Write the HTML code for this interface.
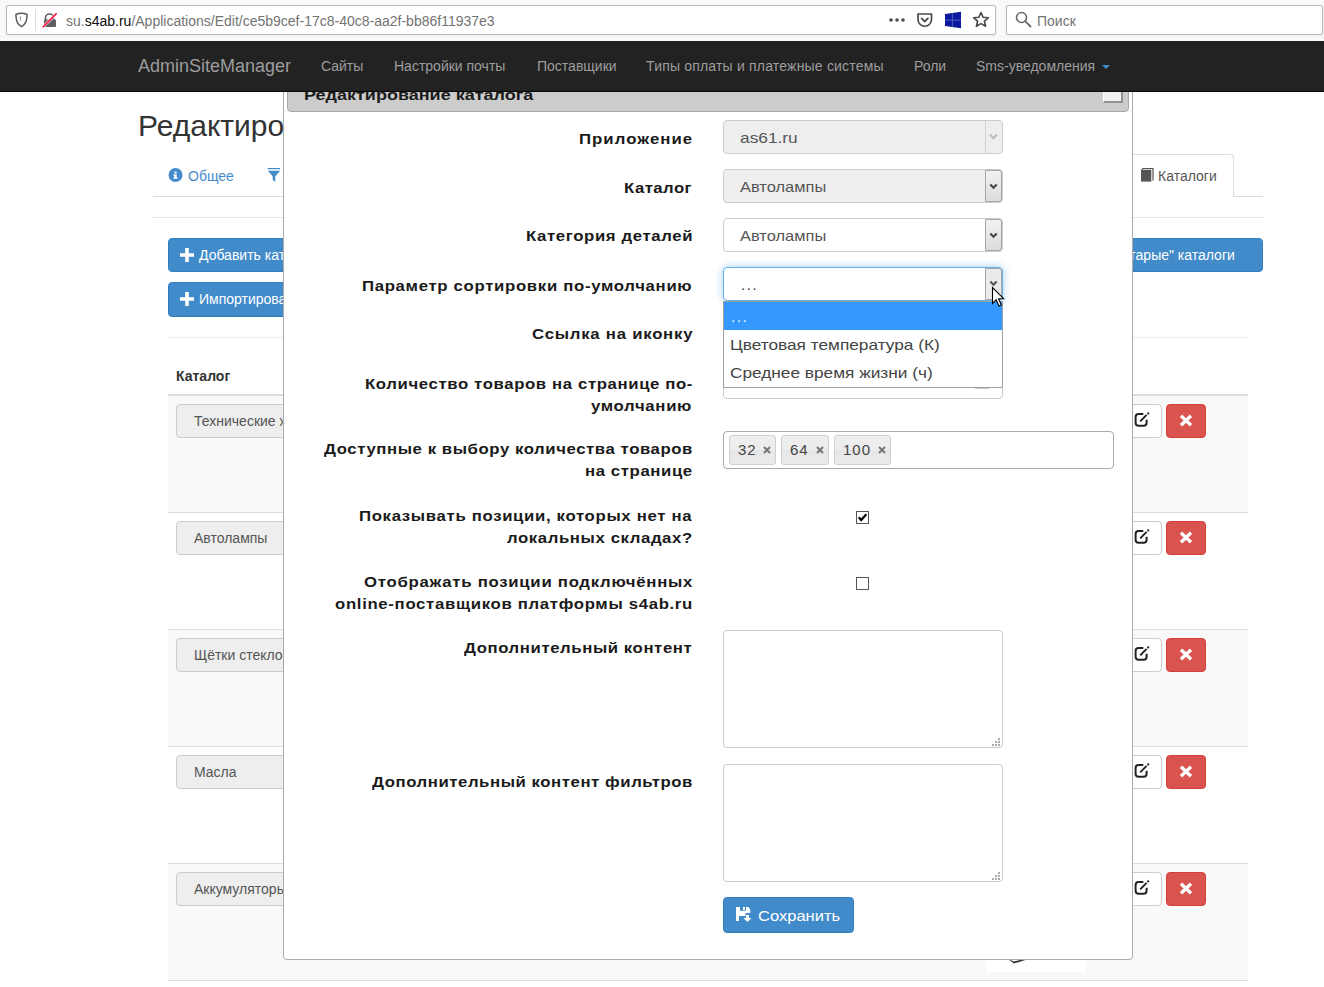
<!DOCTYPE html>
<html><head><meta charset="utf-8">
<style>
*{box-sizing:border-box}
html,body{margin:0;padding:0}
body{width:1324px;height:987px;overflow:hidden;position:relative;background:#fff;font-family:"Liberation Sans",sans-serif;color:#333}
.a{position:absolute}
.t{position:absolute;white-space:nowrap;line-height:1}
/* browser chrome */
#chrome{z-index:11;left:0;top:0;width:1324px;height:41px;background:#f9f9fa}
.ubox{background:#fff;border:1px solid #b9b9bb;border-radius:2px;box-shadow:0 1px 3px rgba(0,0,0,.06)}
/* navbar */
#nav{z-index:10;left:0;top:41px;width:1324px;height:51px;background:#222;border-bottom:1px solid #080808}
.nl{color:#9d9d9d;font-size:14px}
/* page */
.btnp{background:#428bca;border:1px solid #357ebd;border-radius:4px;color:#fff;font-size:14px}
.dis{background:#eee;border:1px solid #ccc;border-radius:4px}
.row{left:168px;width:1080px;height:117px;border-top:1px solid #ddd}
.odd{background:#f9f9f9}
.ebtn{background:#fff;border:1px solid #ccc;border-radius:4px}
.dbtn{background:#d9534f;border:1px solid #d43f3a;border-radius:4px}
/* modal */
#modal{left:283px;top:70px;width:850px;height:890px;background:#fff;border:1px solid #aaa;border-radius:4px}
.lbl{position:absolute;white-space:nowrap;line-height:1;font-weight:bold;font-size:15px;color:#1a1a1a;transform-origin:0 0}
.sel{position:absolute;left:723px;width:280px;height:34px;border:1px solid #ccc;border-radius:4px;background:#fff}
.vt{font-size:15px;color:#555;transform-origin:0 0}
.sx{transform-origin:0 0}
</style></head><body>

<!-- ============ BROWSER CHROME ============ -->
<div id="chrome" class="a">
  <div class="a ubox" style="left:6px;top:5px;width:990px;height:30px"></div>
  <!-- shield -->
  <svg class="a" style="left:14px;top:12px" width="15" height="16" viewBox="0 0 15 16"><path d="M7.5 1.3 C5.5 1.3 3.5 1.8 1.9 2.5 C1.9 8 3 12.5 7.5 14.6 C12 12.5 13.1 8 13.1 2.5 C11.5 1.8 9.5 1.3 7.5 1.3 Z" fill="none" stroke="#5a5a5a" stroke-width="1.5"/><path d="M5.6 5 L6.7 4.6 L6.7 10.2 Z" fill="#5a5a5a"/></svg>
  <div class="a" style="left:35px;top:9px;width:1px;height:22px;background:#ddd"></div>
  <!-- insecure lock -->
  <svg class="a" style="left:42px;top:12px" width="16" height="16" viewBox="0 0 16 16"><path d="M3.5 8 V6 A4 4 0 0 1 11.5 6 V8" fill="none" stroke="#5f5f5f" stroke-width="1.6"/><rect x="2" y="7.5" width="12" height="7.5" rx="1" fill="#5f5f5f"/><path d="M1 15 L14.5 1.5" stroke="#f9f9fa" stroke-width="2.6"/><path d="M1.3 14.7 L14.2 1.8" stroke="#ff0039" stroke-width="1.6" stroke-linecap="round"/></svg>
  <div class="t" style="left:66px;top:14px;font-size:14px;color:#737373">su.<span style="color:#0c0c0d">s4ab.ru</span>/Applications/Edit/ce5b9cef-17c8-40c8-aa2f-bb86f11937e3</div>
  <!-- dots -->
  <svg class="a" style="left:888px;top:17px" width="18" height="6" viewBox="0 0 18 6"><circle cx="3" cy="3" r="1.8" fill="#4a4a4f"/><circle cx="9" cy="3" r="1.8" fill="#4a4a4f"/><circle cx="15" cy="3" r="1.8" fill="#4a4a4f"/></svg>
  <!-- pocket -->
  <svg class="a" style="left:916px;top:12px" width="18" height="16" viewBox="0 0 18 16"><path d="M2 2 H15.5 V7.5 A6.75 6.75 0 0 1 2 7.5 Z" fill="none" stroke="#4a4a4f" stroke-width="1.7" stroke-linejoin="round"/><path d="M5.6 6.4 L8.75 9.4 L11.9 6.4" fill="none" stroke="#4a4a4f" stroke-width="1.8" stroke-linecap="round"/></svg>
  <!-- windows -->
  <svg class="a" style="left:945px;top:11px" width="17" height="18" viewBox="0 0 17 18"><path d="M0 3 L16 0.8 V17.2 L0 15 Z" fill="#0b1a9e"/><path d="M7.4 2 V16.2" stroke="#5563c0" stroke-width="0.9"/><path d="M0 9.1 H16" stroke="#5563c0" stroke-width="0.9"/></svg>
  <!-- star -->
  <svg class="a" style="left:972px;top:11px" width="18" height="18" viewBox="0 0 18 18"><path d="M9 1.5 L11.2 6.3 L16.3 6.8 L12.4 10.2 L13.6 15.3 L9 12.6 L4.4 15.3 L5.6 10.2 L1.7 6.8 L6.8 6.3 Z" fill="none" stroke="#4a4a4f" stroke-width="1.6" stroke-linejoin="round"/></svg>
  <div class="a ubox" style="left:1006px;top:5px;width:317px;height:30px"></div>
  <svg class="a" style="left:1015px;top:11px" width="17" height="17" viewBox="0 0 17 17"><circle cx="6.5" cy="6.5" r="5" fill="none" stroke="#6a6a6a" stroke-width="1.6"/><path d="M10.2 10.2 L15.5 15.5" stroke="#6a6a6a" stroke-width="1.8" stroke-linecap="round"/></svg>
  <div class="t" style="left:1037px;top:14px;font-size:14px;color:#737373">Поиск</div>
</div>

<!-- ============ NAVBAR ============ -->
<div id="nav" class="a">
  <div class="t" style="left:138px;top:16px;font-size:18px;color:#9d9d9d">AdminSiteManager</div>
  <div class="t nl" style="left:321px;top:18px">Сайты</div>
  <div class="t nl" style="left:394px;top:18px">Настройки почты</div>
  <div class="t nl" style="left:537px;top:18px">Поставщики</div>
  <div class="t nl" style="left:646px;top:18px;letter-spacing:0.19px">Типы оплаты и платежные системы</div>
  <div class="t nl" style="left:914px;top:18px">Роли</div>
  <div class="t nl" style="left:976px;top:18px">Sms-уведомления</div>
  <div class="a" style="left:1102px;top:24px;width:0;height:0;border-left:4px solid transparent;border-right:4px solid transparent;border-top:4px solid #428bca"></div>
</div>

<!-- ============ PAGE ============ -->
<div class="t" style="left:138px;top:111px;font-size:30px;color:#333">Редактирование приложения</div>


<!-- tabs -->
<div class="a" style="left:153px;top:196px;width:1110px;height:1px;background:#ddd"></div>
<div class="a" style="left:153px;top:217px;width:1110px;height:1px;background:#e5e5e5"></div>
<svg class="a" style="left:168px;top:168px" width="15" height="15" viewBox="0 0 15 15"><circle cx="7.5" cy="7" r="7" fill="#428bca"/><rect x="6.3" y="3.7" width="2.4" height="1.6" fill="#fff"/><path d="M5.3 6.2 H8.7 V9.4 H9.8 V10.7 H5.3 V9.4 H6.3 V7.4 H5.3 Z" fill="#fff"/></svg>
<div class="t" style="left:188px;top:169px;font-size:14px;color:#428bca">Общее</div>
<svg class="a" style="left:267px;top:168px" width="14" height="15" viewBox="0 0 14 15"><rect x="0.8" y="0" width="12.4" height="1.2" fill="#428bca"/><path d="M0.8 2.8 H13.2 L8.3 8.2 V13.8 L5.7 12 V8.2 Z" fill="#428bca"/></svg>
<div class="a" style="left:1120px;top:154px;width:114px;height:43px;background:#fff;border:1px solid #ddd;border-bottom:0;border-radius:4px 4px 0 0"></div>
<svg class="a" style="left:1140px;top:167px" width="15" height="16" viewBox="0 0 15 16"><path d="M1 3 L2.6 1 H13.6 V13.6 H12.4 V2.2 H3.2 L2.2 3 Z" fill="#555"/><rect x="1" y="3" width="10.3" height="11.6" fill="#555"/></svg>
<div class="t" style="left:1158px;top:169px;font-size:14px;color:#555">Каталоги</div>

<!-- buttons -->
<div class="a btnp" style="left:168px;top:238px;width:180px;height:34px"></div>
<svg class="a" style="left:180px;top:248px" width="14" height="14" viewBox="0 0 14 14"><path d="M5.2 0 H8.8 V5.2 H14 V8.8 H8.8 V14 H5.2 V8.8 H0 V5.2 H5.2 Z" fill="#fff"/></svg>
<div class="t" style="left:199px;top:248px;font-size:14px;color:#fff">Добавить каталог</div>
<div class="a btnp" style="left:168px;top:282px;width:200px;height:35px"></div>
<svg class="a" style="left:180px;top:292px" width="14" height="14" viewBox="0 0 14 14"><path d="M5.2 0 H8.8 V5.2 H14 V8.8 H8.8 V14 H5.2 V8.8 H0 V5.2 H5.2 Z" fill="#fff"/></svg>
<div class="t" style="left:199px;top:292px;font-size:14px;color:#fff">Импортировать каталоги</div>
<div class="a btnp" style="left:1040px;top:238px;width:223px;height:34px"></div>
<div class="t" style="left:1060px;top:248px;font-size:14px;color:#fff">Удалить "старые" каталоги</div>

<div class="a" style="left:168px;top:337px;width:1080px;height:1px;background:#eee"></div>

<!-- table -->
<div class="t" style="left:176px;top:369px;font-size:14px;font-weight:bold;color:#333">Каталог</div>
<div class="a" style="left:168px;top:394px;width:1080px;height:2px;background:#ddd"></div>
<div class="a" style="left:168px;top:396px;width:1080px;height:116px;background:#f9f9f9"></div>
<div class="a dis" style="left:176px;top:404px;width:300px;height:34px"></div>
<div class="t" style="left:194px;top:414px;font-size:14px;color:#555">Технические жидкости</div>
<div class="a ebtn" style="left:1122px;top:404px;width:40px;height:34px"></div>
<svg class="a" style="left:1134px;top:412px" width="16" height="15" viewBox="0 0 16 15"><path d="M9.3 1.9 H4.6 Q1.6 1.9 1.6 4.9 V10.7 Q1.6 13.7 4.6 13.7 H9.6 Q12.6 13.7 12.6 10.7 V7.8" fill="none" stroke="#222" stroke-width="2"/><path d="M6.2 9.3 L12.6 2.9" stroke="#222" stroke-width="1.9"/><circle cx="14.2" cy="1.4" r="1.1" fill="#222"/></svg>
<div class="a dbtn" style="left:1166px;top:404px;width:40px;height:34px"></div>
<svg class="a" style="left:1179px;top:414px" width="14" height="13" viewBox="0 0 14 13"><path d="M2 1.8 L12 11.2 M12 1.8 L2 11.2" stroke="#fff" stroke-width="3.3"/></svg>
<div class="a" style="left:168px;top:512px;width:1080px;height:1px;background:#ddd"></div>
<div class="a" style="left:168px;top:513px;width:1080px;height:116px;background:#fff"></div>
<div class="a dis" style="left:176px;top:521px;width:300px;height:34px"></div>
<div class="t" style="left:194px;top:531px;font-size:14px;color:#555">Автолампы</div>
<div class="a ebtn" style="left:1122px;top:521px;width:40px;height:34px"></div>
<svg class="a" style="left:1134px;top:529px" width="16" height="15" viewBox="0 0 16 15"><path d="M9.3 1.9 H4.6 Q1.6 1.9 1.6 4.9 V10.7 Q1.6 13.7 4.6 13.7 H9.6 Q12.6 13.7 12.6 10.7 V7.8" fill="none" stroke="#222" stroke-width="2"/><path d="M6.2 9.3 L12.6 2.9" stroke="#222" stroke-width="1.9"/><circle cx="14.2" cy="1.4" r="1.1" fill="#222"/></svg>
<div class="a dbtn" style="left:1166px;top:521px;width:40px;height:34px"></div>
<svg class="a" style="left:1179px;top:531px" width="14" height="13" viewBox="0 0 14 13"><path d="M2 1.8 L12 11.2 M12 1.8 L2 11.2" stroke="#fff" stroke-width="3.3"/></svg>
<div class="a" style="left:168px;top:629px;width:1080px;height:1px;background:#ddd"></div>
<div class="a" style="left:168px;top:630px;width:1080px;height:116px;background:#f9f9f9"></div>
<div class="a dis" style="left:176px;top:638px;width:300px;height:34px"></div>
<div class="t" style="left:194px;top:648px;font-size:14px;color:#555">Щётки стеклоочистителя</div>
<div class="a ebtn" style="left:1122px;top:638px;width:40px;height:34px"></div>
<svg class="a" style="left:1134px;top:646px" width="16" height="15" viewBox="0 0 16 15"><path d="M9.3 1.9 H4.6 Q1.6 1.9 1.6 4.9 V10.7 Q1.6 13.7 4.6 13.7 H9.6 Q12.6 13.7 12.6 10.7 V7.8" fill="none" stroke="#222" stroke-width="2"/><path d="M6.2 9.3 L12.6 2.9" stroke="#222" stroke-width="1.9"/><circle cx="14.2" cy="1.4" r="1.1" fill="#222"/></svg>
<div class="a dbtn" style="left:1166px;top:638px;width:40px;height:34px"></div>
<svg class="a" style="left:1179px;top:648px" width="14" height="13" viewBox="0 0 14 13"><path d="M2 1.8 L12 11.2 M12 1.8 L2 11.2" stroke="#fff" stroke-width="3.3"/></svg>
<div class="a" style="left:168px;top:746px;width:1080px;height:1px;background:#ddd"></div>
<div class="a" style="left:168px;top:747px;width:1080px;height:116px;background:#fff"></div>
<div class="a dis" style="left:176px;top:755px;width:300px;height:34px"></div>
<div class="t" style="left:194px;top:765px;font-size:14px;color:#555">Масла</div>
<div class="a ebtn" style="left:1122px;top:755px;width:40px;height:34px"></div>
<svg class="a" style="left:1134px;top:763px" width="16" height="15" viewBox="0 0 16 15"><path d="M9.3 1.9 H4.6 Q1.6 1.9 1.6 4.9 V10.7 Q1.6 13.7 4.6 13.7 H9.6 Q12.6 13.7 12.6 10.7 V7.8" fill="none" stroke="#222" stroke-width="2"/><path d="M6.2 9.3 L12.6 2.9" stroke="#222" stroke-width="1.9"/><circle cx="14.2" cy="1.4" r="1.1" fill="#222"/></svg>
<div class="a dbtn" style="left:1166px;top:755px;width:40px;height:34px"></div>
<svg class="a" style="left:1179px;top:765px" width="14" height="13" viewBox="0 0 14 13"><path d="M2 1.8 L12 11.2 M12 1.8 L2 11.2" stroke="#fff" stroke-width="3.3"/></svg>
<div class="a" style="left:168px;top:863px;width:1080px;height:1px;background:#ddd"></div>
<div class="a" style="left:168px;top:864px;width:1080px;height:116px;background:#f9f9f9"></div>
<div class="a dis" style="left:176px;top:872px;width:300px;height:34px"></div>
<div class="t" style="left:194px;top:882px;font-size:14px;color:#555">Аккумуляторы</div>
<div class="a ebtn" style="left:1122px;top:872px;width:40px;height:34px"></div>
<svg class="a" style="left:1134px;top:880px" width="16" height="15" viewBox="0 0 16 15"><path d="M9.3 1.9 H4.6 Q1.6 1.9 1.6 4.9 V10.7 Q1.6 13.7 4.6 13.7 H9.6 Q12.6 13.7 12.6 10.7 V7.8" fill="none" stroke="#222" stroke-width="2"/><path d="M6.2 9.3 L12.6 2.9" stroke="#222" stroke-width="1.9"/><circle cx="14.2" cy="1.4" r="1.1" fill="#222"/></svg>
<div class="a dbtn" style="left:1166px;top:872px;width:40px;height:34px"></div>
<svg class="a" style="left:1179px;top:882px" width="14" height="13" viewBox="0 0 14 13"><path d="M2 1.8 L12 11.2 M12 1.8 L2 11.2" stroke="#fff" stroke-width="3.3"/></svg>


<div class="a" style="left:168px;top:980px;width:1080px;height:1px;background:#ddd"></div>
<div class="a" style="left:986px;top:955px;width:100px;height:17px;background:#fff"></div>
<svg class="a" style="left:1005px;top:958px" width="30" height="8" viewBox="0 0 30 8"><path d="M3 1 L9 5.5 L25 0.5 L17 1.5 L9 3.5 Z" fill="#333"/></svg>

<!-- ============ MODAL ============ -->
<div id="modal" class="a" style="left:283px;top:60px;width:850px;height:900px"></div>
<div class="a" style="left:287px;top:60px;width:842px;height:52px;background:#ccc;border:1px solid #aaa;border-radius:4px"></div>
<div class="lbl" style="left:304px;top:87px;font-size:15px;transform:scaleX(1.2)">Редактирование каталога</div>
<div class="a" style="left:1103px;top:80px;width:20px;height:23px;background:#f0f0f0;border-style:solid;border-width:1px 2px 2px 1px;border-color:#fff #929292 #929292 #fff"></div>
<div class="lbl" style="left:579.3px;top:130.6px;font-size:15.5px;letter-spacing:0.979px;transform:scaleX(1.08)">Приложение</div>
<div class="lbl" style="left:623.9px;top:179.9px;font-size:15.5px;letter-spacing:0.420px;transform:scaleX(1.08)">Каталог</div>
<div class="lbl" style="left:525.7px;top:228.4px;font-size:15.5px;letter-spacing:0.590px;transform:scaleX(1.08)">Категория деталей</div>
<div class="lbl" style="left:362.4px;top:277.9px;font-size:15.5px;letter-spacing:0.634px;transform:scaleX(1.08)">Параметр сортировки по-умолчанию</div>
<div class="lbl" style="left:532.0px;top:326.4px;font-size:15.5px;letter-spacing:0.707px;transform:scaleX(1.08)">Ссылка на иконку</div>
<div class="lbl" style="left:365.2px;top:375.6px;font-size:15.5px;letter-spacing:0.577px;transform:scaleX(1.08)">Количество товаров на странице по-</div>
<div class="lbl" style="left:591.0px;top:397.5px;font-size:15.5px;letter-spacing:0.623px;transform:scaleX(1.08)">умолчанию</div>
<div class="lbl" style="left:323.9px;top:441.3px;font-size:15.5px;letter-spacing:0.536px;transform:scaleX(1.08)">Доступные к выбору количества товаров</div>
<div class="lbl" style="left:585.0px;top:463.2px;font-size:15.5px;letter-spacing:0.554px;transform:scaleX(1.08)">на странице</div>
<div class="lbl" style="left:359.3px;top:507.7px;font-size:15.5px;letter-spacing:0.622px;transform:scaleX(1.08)">Показывать позиции, которых нет на</div>
<div class="lbl" style="left:507.3px;top:529.7px;font-size:15.5px;letter-spacing:0.558px;transform:scaleX(1.08)">локальных складах?</div>
<div class="lbl" style="left:363.8px;top:573.8px;font-size:15.5px;letter-spacing:0.678px;transform:scaleX(1.08)">Отображать позиции подключённых</div>
<div class="lbl" style="left:335.1px;top:595.7px;font-size:15.5px;letter-spacing:0.626px;transform:scaleX(1.08)">online-поставщиков платформы s4ab.ru</div>
<div class="lbl" style="left:464.2px;top:640.2px;font-size:15.5px;letter-spacing:0.542px;transform:scaleX(1.08)">Дополнительный контент</div>
<div class="lbl" style="left:372.0px;top:773.7px;font-size:15.5px;letter-spacing:0.525px;transform:scaleX(1.08)">Дополнительный контент фильтров</div>

<!-- select 1 disabled -->
<div class="sel" style="top:120px;background:#eee"></div>
<div class="a" style="left:985px;top:121px;width:1px;height:32px;background:#d4d4d4"></div>
<svg class="a" style="left:989px;top:133px" width="9" height="8" viewBox="0 0 9 8"><path d="M1 1.5 L4.5 5.2 L8 1.5" fill="none" stroke="#bababa" stroke-width="2"/></svg>
<div class="t vt" style="left:740px;top:130px;transform:scaleX(1.154)">as61.ru</div>

<!-- select 2 -->
<div class="sel" style="top:169px;background:#eee"></div>
<div class="a" style="left:985px;top:170px;width:17px;height:32px;border:1px solid #a6a6a6;border-radius:0 3px 3px 0;background:linear-gradient(#f2f2f2,#dcdcdc)"></div><svg class="a" style="left:989px;top:183px" width="9" height="7" viewBox="0 0 9 7"><path d="M1.3 1.4 L4.5 4.7 L7.7 1.4" fill="none" stroke="#444" stroke-width="2.1"/></svg>
<div class="t vt" style="left:740px;top:179px;transform:scaleX(1.096)">Автолампы</div>

<!-- select 3 -->
<div class="sel" style="top:218px;background:#fff"></div>
<div class="a" style="left:985px;top:219px;width:17px;height:32px;border:1px solid #a6a6a6;border-radius:0 3px 3px 0;background:linear-gradient(#f2f2f2,#dcdcdc)"></div><svg class="a" style="left:989px;top:232px" width="9" height="7" viewBox="0 0 9 7"><path d="M1.3 1.4 L4.5 4.7 L7.7 1.4" fill="none" stroke="#444" stroke-width="2.1"/></svg>
<div class="t vt" style="left:740px;top:228px;transform:scaleX(1.096)">Автолампы</div>

<!-- input 5 and 6 -->
<div class="sel" style="top:316px;background:#fff"></div>
<div class="sel" style="top:365px;background:#fff"></div>
<div class="a" style="left:975px;top:387px;width:14px;height:2px;background:#c8c8c8"></div>

<!-- select 4 focused -->
<div class="sel" style="top:267px;background:#fff;border-color:#66afe9;box-shadow:0 0 8px rgba(102,175,233,.6)"></div>
<div class="a" style="left:985px;top:268px;width:17px;height:32px;border:1px solid #a6a6a6;border-radius:0 3px 3px 0;background:#ebebeb"></div><svg class="a" style="left:989px;top:280px" width="9" height="7" viewBox="0 0 9 7"><path d="M1.3 1.4 L4.5 4.7 L7.7 1.4" fill="none" stroke="#555" stroke-width="2.1"/></svg>
<div class="t vt" style="left:741px;top:277px;letter-spacing:1.6px;color:#333">...</div>

<!-- dropdown -->
<div class="a" style="left:723px;top:301px;width:280px;height:87px;background:#fff;border:1px solid #a0a0a0"></div>
<div class="a" style="left:724px;top:302px;width:278px;height:28px;background:#3399ff"></div>
<div class="t" style="left:731px;top:309px;font-size:15px;color:#fff;letter-spacing:1.6px">...</div>
<div class="t sx" style="left:730px;top:337px;font-size:15px;color:#444;transform:scaleX(1.15)">Цветовая температура (К)</div>
<div class="t sx" style="left:730px;top:365px;font-size:15px;color:#444;transform:scaleX(1.15)">Среднее время жизни (ч)</div>

<svg class="a" style="left:991px;top:286px;z-index:5" width="14" height="22" viewBox="0 0 14 22"><path d="M1.5 1.5 V17.5 L5.2 13.8 L8 20 L10.3 19 L7.6 12.8 L12.8 12.8 Z" fill="#fff" stroke="#000" stroke-width="1.1" stroke-linejoin="miter"/></svg>

<!-- tags -->
<div class="a" style="left:723px;top:431px;width:391px;height:38px;border:1px solid #aaa;border-radius:4px;background:#fff"></div>
<div class="a" style="left:729px;top:435px;width:47px;height:30px;border:1px solid #d0d0d0;border-radius:3px;background:linear-gradient(#eeeeee 0%,#ececec 50%,#e6e6e6 50%,#ebebeb 100%)"></div>
<div class="t" style="left:738px;top:442px;font-size:15px;color:#444;letter-spacing:1px">32</div>
<svg class="a" style="left:763px;top:446px" width="8" height="8" viewBox="0 0 8 8"><path d="M1 1 L7 7 M7 1 L1 7" stroke="#777" stroke-width="2"/></svg>
<div class="a" style="left:781px;top:435px;width:48px;height:30px;border:1px solid #d0d0d0;border-radius:3px;background:linear-gradient(#eeeeee 0%,#ececec 50%,#e6e6e6 50%,#ebebeb 100%)"></div>
<div class="t" style="left:790px;top:442px;font-size:15px;color:#444;letter-spacing:1px">64</div>
<svg class="a" style="left:816px;top:446px" width="8" height="8" viewBox="0 0 8 8"><path d="M1 1 L7 7 M7 1 L1 7" stroke="#777" stroke-width="2"/></svg>
<div class="a" style="left:834px;top:435px;width:57px;height:30px;border:1px solid #d0d0d0;border-radius:3px;background:linear-gradient(#eeeeee 0%,#ececec 50%,#e6e6e6 50%,#ebebeb 100%)"></div>
<div class="t" style="left:843px;top:442px;font-size:15px;color:#444;letter-spacing:1px">100</div>
<svg class="a" style="left:878px;top:446px" width="8" height="8" viewBox="0 0 8 8"><path d="M1 1 L7 7 M7 1 L1 7" stroke="#777" stroke-width="2"/></svg>

<!-- checkboxes -->
<div class="a" style="left:856px;top:511px;width:13px;height:13px;border:1px solid #555;background:#fff"></div>
<svg class="a" style="left:856px;top:511px" width="13" height="13" viewBox="0 0 13 13"><path d="M2.7 6.3 L5.2 9 L10.3 3.2" fill="none" stroke="#000" stroke-width="2.2"/></svg>
<div class="a" style="left:856px;top:577px;width:13px;height:13px;border:1px solid #555;background:#fff"></div>

<!-- textareas -->
<div class="a" style="left:723px;top:630px;width:280px;height:118px;border:1px solid #ccc;border-radius:4px;background:#fff"></div>
<div class="a" style="left:723px;top:764px;width:280px;height:118px;border:1px solid #ccc;border-radius:4px;background:#fff"></div>
<div class="a" style="left:998px;top:738px;width:2px;height:2px;background:#aaa"></div><div class="a" style="left:995px;top:741px;width:2px;height:2px;background:#aaa"></div><div class="a" style="left:998px;top:741px;width:2px;height:2px;background:#aaa"></div><div class="a" style="left:992px;top:744px;width:2px;height:2px;background:#aaa"></div><div class="a" style="left:995px;top:744px;width:2px;height:2px;background:#aaa"></div><div class="a" style="left:998px;top:744px;width:2px;height:2px;background:#aaa"></div>
<div class="a" style="left:998px;top:872px;width:2px;height:2px;background:#aaa"></div><div class="a" style="left:995px;top:875px;width:2px;height:2px;background:#aaa"></div><div class="a" style="left:998px;top:875px;width:2px;height:2px;background:#aaa"></div><div class="a" style="left:992px;top:878px;width:2px;height:2px;background:#aaa"></div><div class="a" style="left:995px;top:878px;width:2px;height:2px;background:#aaa"></div><div class="a" style="left:998px;top:878px;width:2px;height:2px;background:#aaa"></div>

<!-- save -->
<div class="a btnp" style="left:723px;top:897px;width:131px;height:36px"></div>
<svg class="a" style="left:736px;top:907px" width="16" height="16" viewBox="0 0 16 16"><path d="M0 0 H4 V3.7 H10 V0 H12.3 L14.3 2.5 V6 H9.5 V9 H3 V14 H0 Z" fill="#fff"/><rect x="7" y="0" width="2" height="3" fill="#fff"/><path d="M10 8 H13 V11 H15.5 L11.5 15 L7.5 11 H10 Z" fill="#fff"/></svg>
<div class="t sx" style="left:758px;top:908.8px;font-size:14px;color:#fff;transform:scaleX(1.18)">Сохранить</div>

</body></html>
